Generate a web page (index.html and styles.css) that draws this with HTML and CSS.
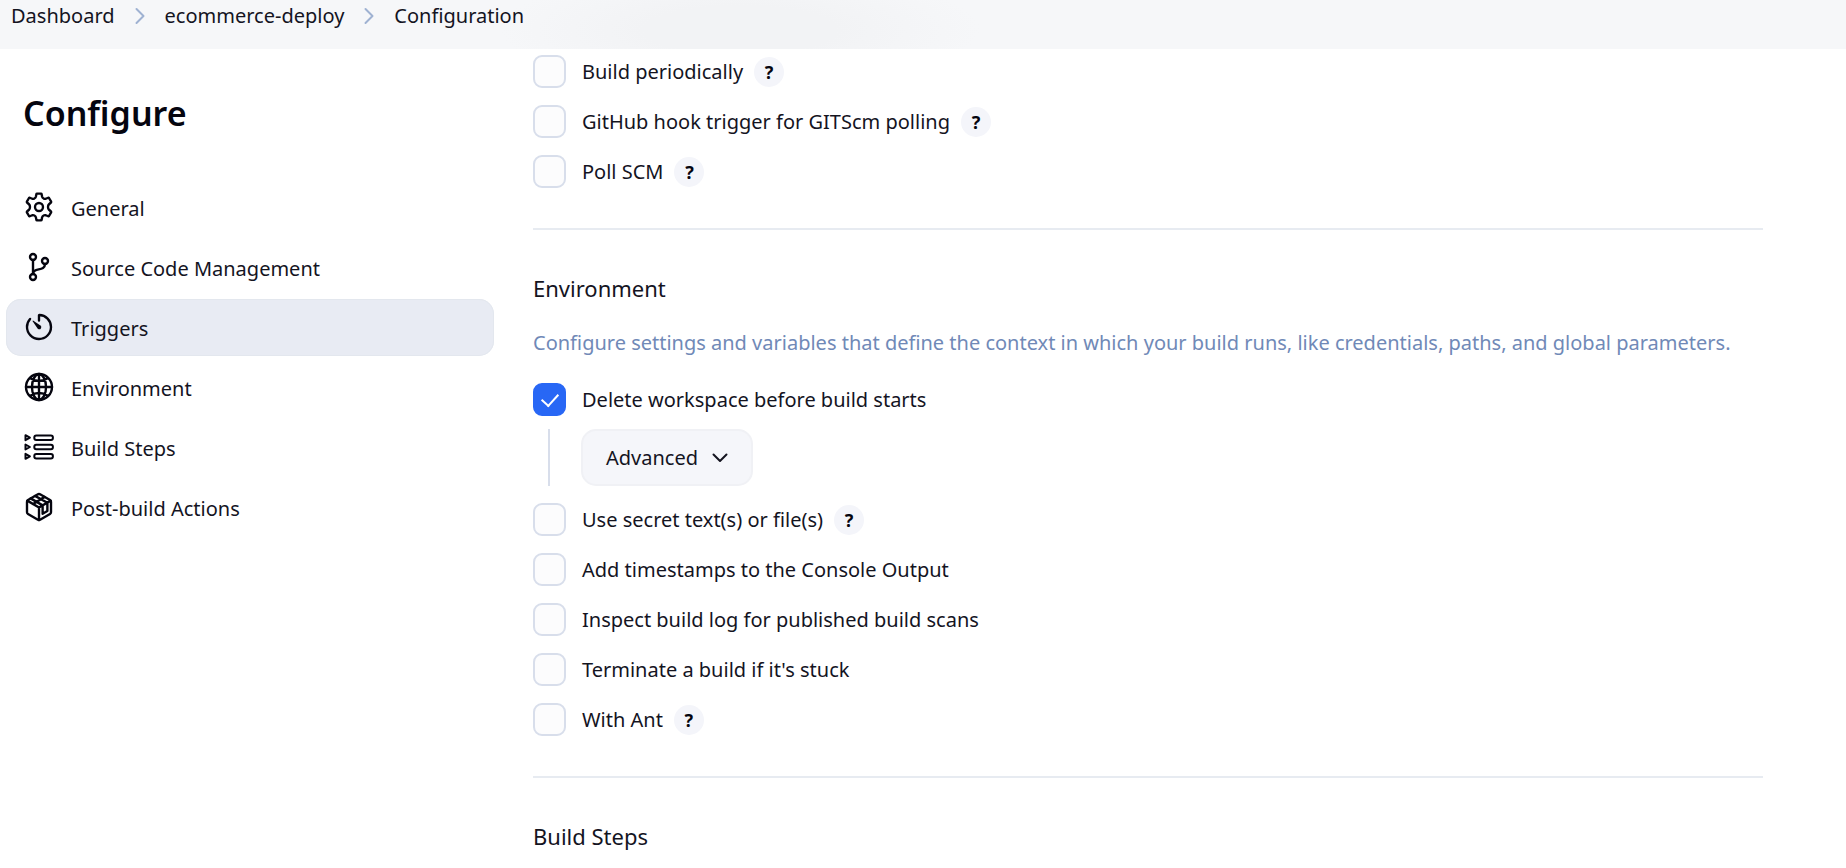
FILE: index.html
```html
<!DOCTYPE html>
<html lang="en">
<head>
<meta charset="utf-8">
<meta name="viewport" content="width=device-width, initial-scale=1">
<title>Configuration</title>
<link rel="stylesheet" href="styles.css">
</head>
<body>
<header class="topbar">
  <nav aria-label="Breadcrumb">
    <ol class="crumbs">
      <li><a href="#">Dashboard</a></li>
      <li class="crumb-sep" aria-hidden="true"><svg viewBox="0 0 10 18"><path d="M1.500 2L8.500 9L1.500 16"/></svg></li>
      <li><a href="#">ecommerce-deploy</a></li>
      <li class="crumb-sep" aria-hidden="true"><svg viewBox="0 0 10 18"><path d="M1.500 2L8.500 9L1.500 16"/></svg></li>
      <li><a href="#">Configuration</a></li>
    </ol>
  </nav>
</header>
<div class="page">
  <aside class="sidebar">
    <h1 class="title">Configure</h1>
    <nav class="tasks" aria-label="Sections">
      <a class="task" href="#general"><svg class="icon" viewBox="0 0 512 512"><circle cx="256" cy="256" r="64"/><path d="M206 92L214 50Q216 42 224 42H288Q296 42 298 50L306 92Q312 112 330 120Q346 130 364 124L404 108Q412 106 416 112L450 170Q454 178 448 184L416 212Q400 226 400 256Q400 286 416 300L448 328Q454 334 450 342L416 400Q412 406 404 404L364 388Q346 382 330 392Q312 400 306 420L298 462Q296 470 288 470H224Q216 470 214 462L206 420Q200 400 182 392Q166 382 148 388L108 404Q100 406 96 400L62 342Q58 334 64 328L96 300Q112 286 112 256Q112 226 96 212L64 184Q58 178 62 170L96 112Q100 106 108 108L148 124Q166 130 182 120Q200 112 206 92Z"/></svg>General</a>
      <a class="task" href="#scm"><svg class="icon" viewBox="0 0 512 512"><circle cx="160" cy="96" r="48"/><circle cx="160" cy="416" r="48"/><circle cx="352" cy="160" r="48"/><path d="M160 368V144M352 208c0 128-192 48-192 160"/></svg>Source Code Management</a>
      <a class="task task-active" href="#triggers" aria-current="true"><svg class="icon" viewBox="0 0 512 512"><path d="M112.910 128A191.850 191.850 0 0064 254c-1.180 106.350 85.650 193.800 192 194 106.200.200 192-85.830 192-192 0-104.540-83.550-189.610-187.500-192a4.360 4.360 0 00-4.500 4.370V152"/><path class="solid" d="M233.380 278.630l-79-113a8.130 8.130 0 0111.320-11.320l113 79a32.500 32.500 0 01-37.250 53.260 33.210 33.210 0 01-8.070-7.940z"/></svg>Triggers</a>
      <a class="task" href="#environment"><svg class="icon" viewBox="0 0 512 512"><circle cx="256" cy="256" r="208"/><path d="M256 48c-58 0-113 93-113 208s55 208 113 208 113-93 113-208S314 48 256 48zM117 117c38 27 86 43 139 43s101-16 139-43M395 395c-38-27-86-43-139-43s-101 16-139 43M256 48v416M464 256H48"/></svg>Environment</a>
      <a class="task" href="#steps"><svg class="icon icon-thin" viewBox="0 0 32 32"><rect x="11.300" y="4.400" width="18.600" height="4.600" rx="2"/><rect x="11.300" y="13.700" width="18.600" height="4.600" rx="2"/><rect x="11.300" y="23" width="18.600" height="4.600" rx="2"/><path d="M2.500 4.200v5l4.400-2.500zM2.500 13.500v5l4.400-2.500zM2.500 22.800v5l4.400-2.500z"/></svg>Build Steps</a>
      <a class="task" href="#post"><svg class="icon" viewBox="0 0 512 512"><path d="M448 341.370V170.610A32 32 0 00432.110 143l-152-88.460a47.940 47.940 0 00-48.240 0L79.890 143A32 32 0 0064 170.610v170.760A32 32 0 0079.890 369l152 88.460a48 48 0 0048.240 0l152-88.460A32 32 0 00448 341.370z"/><path d="M69 153.990l187 110 187-110M256 463.990v-200M122 118l192 112v134l76-44V188L192 78M162 208L346 94"/></svg>Post-build Actions</a>
    </nav>
  </aside>
  <main class="content">
    <section class="options">
      <div class="option"><input class="check" type="checkbox" id="c1"><label for="c1">Build periodically</label><button class="help" type="button" aria-label="Help for Build periodically">?</button></div>
      <div class="option"><input class="check" type="checkbox" id="c2"><label for="c2">GitHub hook trigger for GITScm polling</label><button class="help" type="button" aria-label="Help for GitHub hook trigger">?</button></div>
      <div class="option"><input class="check" type="checkbox" id="c3"><label for="c3">Poll SCM</label><button class="help" type="button" aria-label="Help for Poll SCM">?</button></div>
    </section>
    <section class="section" id="environment">
      <h2 class="heading">Environment</h2>
      <p class="description">Configure settings and variables that define the context in which your build runs, like credentials, paths, and global parameters.</p>
      <div class="options">
        <div class="option-group">
          <div class="option"><input class="check" type="checkbox" id="c4" checked><label for="c4">Delete workspace before build starts</label></div>
          <div class="nested"><button class="advanced" type="button">Advanced<svg viewBox="0 0 16 10"><path d="M1.500 1.500L8 8L14.500 1.500"/></svg></button></div>
        </div>
        <div class="option"><input class="check" type="checkbox" id="c5"><label for="c5">Use secret text(s) or file(s)</label><button class="help" type="button" aria-label="Help for Use secret text(s) or file(s)">?</button></div>
        <div class="option"><input class="check" type="checkbox" id="c6"><label for="c6">Add timestamps to the Console Output</label></div>
        <div class="option"><input class="check" type="checkbox" id="c7"><label for="c7">Inspect build log for published build scans</label></div>
        <div class="option"><input class="check" type="checkbox" id="c8"><label for="c8">Terminate a build if it's stuck</label></div>
        <div class="option"><input class="check" type="checkbox" id="c9"><label for="c9">With Ant</label><button class="help" type="button" aria-label="Help for With Ant">?</button></div>
      </div>
    </section>
    <section class="section" id="steps">
      <h2 class="heading">Build Steps</h2>
    </section>
  </main>
</div>
</body>
</html>
```
FILE: styles.css
```css
* { box-sizing: border-box; }
body {
  margin: 0;
  background: #fff;
  color: #14141f;
  font: 400 20px/30px "Noto Sans", "Open Sans", sans-serif;
}
a { color: inherit; text-decoration: none; }
.topbar {
  padding: 1px 11px 18px;
  background: radial-gradient(ellipse 240px 60px at 740px 30px, #f2f3f5 40%, #f6f7f9);
}
.crumbs {
  display: flex;
  align-items: center;
  gap: 20px;
  margin: 0;
  padding: 0;
  list-style: none;
}
.crumb-sep { display: flex; }
.crumb-sep svg { width: 10px; height: 18px; }
svg { fill: none; stroke: currentColor; stroke-linecap: round; stroke-linejoin: round; }
.crumb-sep svg { stroke: #9fb2d2; stroke-width: 2; }
.page { display: flex; }
.sidebar { flex: 0 0 500px; padding: 40px 6px 0; }
.title { margin: 0 0 42px; padding-left: 17px; font-size: 34px; line-height: 48px; font-weight: 600; color: #05050f; }
.tasks { display: flex; flex-direction: column; gap: 3px; }
.task {
  display: flex;
  align-items: center;
  gap: 16px;
  min-height: 57px;
  padding: 2px 17px 0;
  border-radius: 15px;
}
.task-active { background: #e8ebf3; box-shadow: inset 0 0 0 1px #e3e7ee; }
.icon { width: 32px; height: 32px; margin-bottom: 4px; stroke-width: 38; color: #05050f; }
.icon-thin { stroke-width: 2; }
.solid { fill: currentColor; stroke: none; }
.content { flex: 1; min-width: 0; padding: 6px 83px 0 33px; }
.options { display: flex; flex-direction: column; gap: 17px; }
.option { display: flex; align-items: center; min-height: 33px; }
.option label { margin-left: 16px; }
.check {
  appearance: none;
  display: grid;
  place-items: center;
  width: 33px;
  height: 33px;
  margin: 0;
  border: 2px solid #d8deeb;
  border-radius: 9px;
  background: #fcfcfd;
}
.check:checked { border-color: #2867f5; background: #2867f5; }
.check:checked::before {
  content: "";
  width: 8px;
  height: 14px;
  margin-bottom: 4px;
  border: solid #fff;
  border-width: 0 2px 2px 0;
  transform: rotate(42deg);
}
.help {
  width: 30px;
  height: 30px;
  margin-left: 11px;
  padding: 0;
  border: 0;
  border-radius: 50%;
  background: #f4f5fa;
  color: #05050f;
  font: 700 18px/30px "Noto Sans", "Open Sans", sans-serif;
}
.section { margin-top: 40px; border-top: 2px solid #e7ebf1; padding-top: 43px; }
.heading { margin: 0; font-size: 22px; line-height: 30px; font-weight: 400; }
.description { margin: 25px 0; color: #7089b7; }
.nested { margin: 13px 0 0 15px; padding-left: 31px; border-left: 2px solid #d8deeb; }
.advanced {
  display: flex;
  align-items: center;
  gap: 14px;
  height: 57px;
  padding: 0 23px;
  border: 2px solid #f0f1f5;
  border-radius: 15px;
  background: #f5f6fa;
  color: #14141f;
  font: inherit;
}
.advanced svg { width: 16px; height: 10px; stroke-width: 2; }
```
